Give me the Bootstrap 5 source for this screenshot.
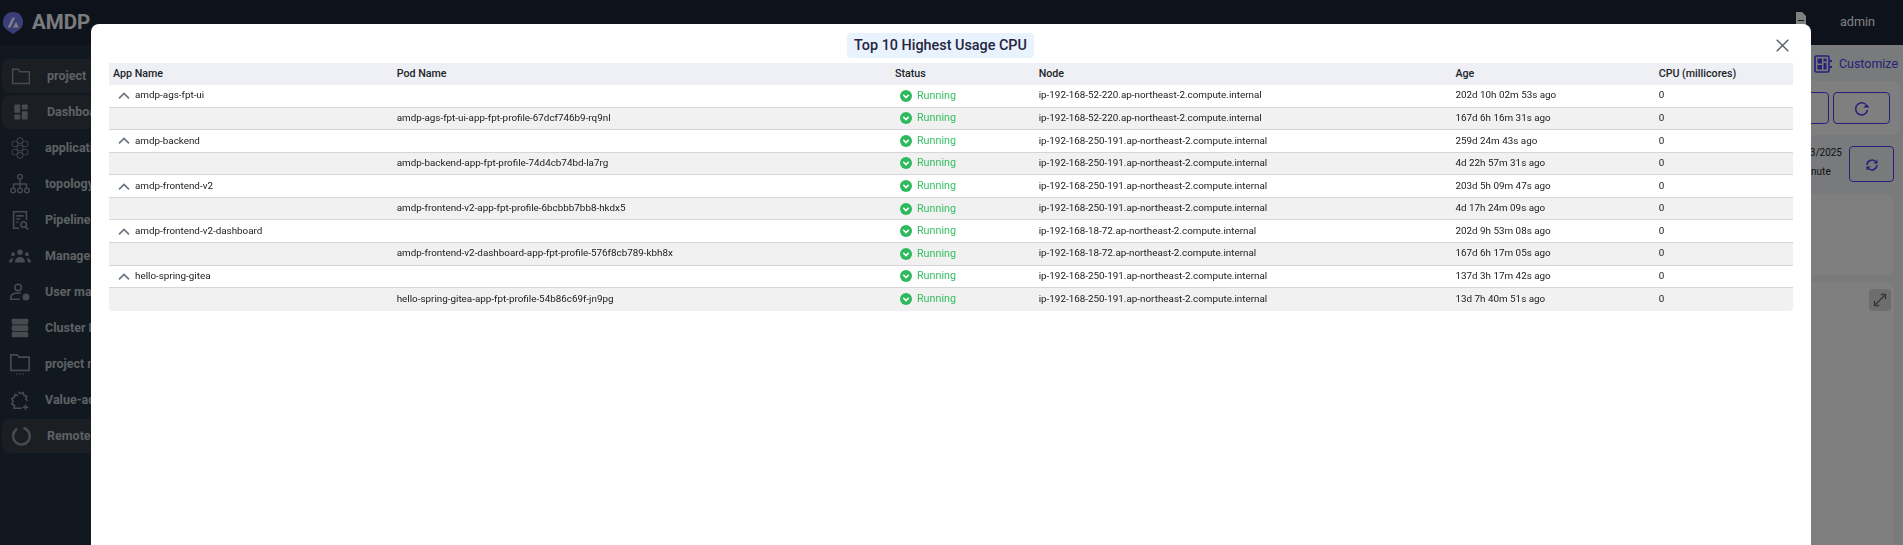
<!DOCTYPE html>
<html lang="en">
<head>
<meta charset="utf-8">
<title>AMDP</title>
<link href="https://cdn.jsdelivr.net/npm/bootstrap@5.3.0/dist/css/bootstrap.min.css" rel="stylesheet">
<style>
html,body{height:545px;overflow:hidden}
body{font-family:Roboto,"Liberation Sans",sans-serif;background:#f1f5f9;color:#212529}
.app-top{height:45px;background:#1c2434}
.app-brand{width:290px;padding-left:3px;gap:9px}
.brand-name{font-size:20.5px;font-weight:700;color:#f4f6fa;line-height:1}
.top-doc{margin-right:34px;margin-top:-8px}
.top-user{font-size:12.6px;color:#fff;margin-right:28px}
.app-body{height:500px}
.app-side{width:290px;background:#24303f;padding-top:13px;flex:none}
.side-item{height:36px;color:#bcc2c9;font-size:12.5px;font-weight:700;padding-left:9px;gap:14px;white-space:nowrap;position:relative;z-index:0}
.side-ico{width:22px;height:22px;flex:none;color:#8f959d}
.side-item.is-on{padding-left:11px;gap:16px}
.side-item.is-on .side-ico{width:20px;height:20px}
.side-item.is-on::before{content:"";position:absolute;left:2px;right:2px;top:1px;bottom:1px;background:#363c46;border-radius:8px;z-index:-1}
.app-main{min-width:0;padding-right:3px}
.app-main>*{flex:none}
.cust-row{height:36px;padding:2px 2px 0 0;gap:7px;font-size:12.44px;color:#5040f0}
.panel-a{height:54px;background:#fff;border-radius:8px;padding:11px 10px 0 0;gap:4px}
.out-btn{height:32px;width:57px;border:1px solid #5040f0;border-radius:4px;color:#5040f0;background:transparent;padding:0}
.out-btn svg{width:16px;height:16px}
.time-row{height:59px;padding:8px 6px 0 0;gap:7px;font-size:10px;color:#212529;line-height:19px}
.time-two{padding-left:3px}
.time-btn{width:45px;height:36px;margin-top:3px}
.panel-b{background:#fff;border-radius:8px;margin-right:6px}
.panel-one{height:81px}
.panel-two{height:263px;margin-top:7px;padding:7px 3px 0 0;border-radius:8px 8px 0 0}
.exp-btn{width:22px;height:22px;background:#dcdcdc;border-radius:4px;color:#666}
.cpu-dialog{max-width:1720px;width:1720px;margin:24px 0 0 91px}
.cpu-content{height:521px;border:0;border-radius:8px 8px 0 0;padding:9px 18px 0}
.cpu-head{height:30px}
.cpu-title{background:#e9f3fd;color:#26263f;font-size:14.38px;font-weight:500;border-radius:4px;padding:0 7px;height:25px;line-height:25px;margin-right:21px!important}
.cpu-x{right:4px;top:6px;width:13px;height:13px;padding:0;border:0;background:transparent;color:#5a6268}
.cpu-table{font-size:9.85px;table-layout:fixed;width:1684px;margin:0;border-collapse:separate;border-spacing:0;color:#1a1a1a}
.cpu-table th{background:#eff0f5;font-size:10.7px;font-weight:500;height:22px;padding:0 4px;border:0;vertical-align:middle;white-space:nowrap;color:#212529;box-shadow:none}
.cpu-table td{height:22.57px;padding:0 4px;border:0;border-bottom:1px solid #d6d6d6;vertical-align:middle;white-space:nowrap;box-shadow:none;background:#fff}
.cpu-table tr.pod-row td{background:#f1f1f1}
.cpu-table tr:last-child td{border-bottom:0}
.cpu-table tr:last-child td:first-child{border-bottom-left-radius:4px}
.cpu-table tr:last-child td:last-child{border-bottom-right-radius:4px}
.app-cell{padding-left:5px;gap:5px}
.chev{width:12px;height:7px;color:#6b7480;flex:none}
.run-cell{color:#35bf63;font-size:10.75px;padding-left:5px;gap:5px}
.run-ico{width:12px;height:12px;flex:none}
</style>
</head>
<body>
<svg width="0" height="0" class="d-none">
  <symbol id="chev" viewBox="0 0 12 7"><path d="M1 6.300 6 1.400 11 6.300" fill="none" stroke="currentColor" stroke-width="1.700"/></symbol>
  <symbol id="run" viewBox="0 0 12 12"><circle cx="6" cy="6" r="6" fill="#2fb95d"/><path d="M3.300 4.900 6 7.600 8.700 4.900" fill="none" stroke="#fff" stroke-width="1.500"/></symbol>
  <symbol id="hex" viewBox="0 0 8 8"><path d="M4 .5 7.200 2.250v3.500L4 7.500.8 5.750v-3.500z" fill="none" stroke="currentColor"/></symbol>
</svg>

<div class="app-top d-flex align-items-center">
  <div class="app-brand d-flex align-items-center">
    <svg width="20" height="22" viewBox="0 0 20 22"><path d="M10 0a10 10 0 0 1 7 17.200L10 22l-7-4.800A10 10 0 0 1 10 0z" fill="#757cf0"/><path d="M4.500 15.500 9.500 5.500H12L7.500 15.500zM10 15.500l3-5.500 3 5.500z" fill="#fff"/></svg>
    <span class="brand-name">AMDP</span>
  </div>
  <div class="ms-auto d-flex align-items-center">
    <svg class="top-doc" width="10" height="13" viewBox="0 0 10 13"><path d="M0 0h6l4 4v9H0z" fill="#fff"/><path d="M2 8h6v1H2z" fill="#1c2434"/></svg>
    <span class="top-user">admin</span>
  </div>
</div>

<div class="app-body d-flex">
  <nav class="app-side d-flex flex-column">
    <div class="side-item is-on d-flex align-items-center"><svg class="side-ico" viewBox="0 0 24 24" fill="none" stroke="currentColor" stroke-width="1.800"><path d="M2 4h7l2 3h11v14H2z"/></svg>project</div>
    <div class="side-item is-on d-flex align-items-center"><svg class="side-ico" viewBox="0 0 24 24" fill="currentColor"><rect x="4" y="3" width="7" height="10" rx="1"/><rect x="13" y="3" width="7" height="6" rx="1"/><rect x="4" y="15" width="7" height="6" rx="1"/><rect x="13" y="11" width="7" height="10" rx="1"/></svg>Dashboard</div>
    <div class="side-item d-flex align-items-center"><svg class="side-ico" viewBox="0 0 24 24"><use href="#hex" x="8" y="0" width="8" height="8"/><use href="#hex" x="2.500" y="3.500" width="8" height="8"/><use href="#hex" x="13.500" y="3.500" width="8" height="8"/><use href="#hex" x="8" y="8" width="8" height="8"/><use href="#hex" x="2.500" y="12.500" width="8" height="8"/><use href="#hex" x="13.500" y="12.500" width="8" height="8"/><use href="#hex" x="8" y="16" width="8" height="8"/></svg>application</div>
    <div class="side-item d-flex align-items-center"><svg class="side-ico" viewBox="0 0 24 24" fill="none" stroke="currentColor" stroke-width="1.500"><circle cx="12" cy="4" r="2.500"/><path d="M12 7v9M5 16v-4h14v4"/><circle cx="4.500" cy="19" r="2.500"/><circle cx="12" cy="19" r="2.500"/><circle cx="19.500" cy="19" r="2.500"/></svg>topology</div>
    <div class="side-item d-flex align-items-center"><svg class="side-ico" viewBox="0 0 24 24" fill="none" stroke="currentColor" stroke-width="1.700"><path d="M11 21H5V3h14v9M8 7.500h8M8 11h4M8 14.500h2"/><circle cx="16" cy="17" r="3"/><path d="M18 19.500l3 3"/></svg>Pipeline</div>
    <div class="side-item d-flex align-items-center"><svg class="side-ico" viewBox="0 0 24 24" fill="currentColor"><circle cx="12" cy="8" r="3"/><circle cx="4.500" cy="10" r="2"/><circle cx="19.500" cy="10" r="2"/><path d="M6.500 19c0-4 2.500-6 5.500-6s5.500 2 5.500 6zM0 19c0-3 2-5 5-4.500-1 1-1.500 2.500-1.500 4.500zM24 19c0-3-2-5-5-4.500 1 1 1.500 2.500 1.500 4.500z"/></svg>Manage</div>
    <div class="side-item d-flex align-items-center"><svg class="side-ico" viewBox="0 0 24 24" fill="none" stroke="currentColor" stroke-width="1.700"><circle cx="10" cy="7" r="3.500"/><path d="M12 20H2v-2c0-3 3-5 8-5 1 0 2 .1 3 .4"/><circle cx="18.500" cy="17.500" r="3" fill="currentColor"/></svg>User management</div>
    <div class="side-item d-flex align-items-center"><svg class="side-ico" viewBox="0 0 24 24" fill="currentColor"><rect x="3" y="2" width="18" height="6.200" rx="1.500"/><rect x="3" y="9" width="18" height="6.200" rx="1.500"/><rect x="3" y="16" width="18" height="6.200" rx="1.500"/></svg>Cluster Management</div>
    <div class="side-item d-flex align-items-center"><svg class="side-ico" viewBox="0 0 24 24" fill="none" stroke="currentColor" stroke-width="1.800"><path d="M2 2h7l2 2.500h11V19H2z"/><path d="M8 23h1.500M11.250 23h1.500M14.500 23H16" stroke-width="1.200"/></svg>project management</div>
    <div class="side-item d-flex align-items-center"><svg class="side-ico" viewBox="0 0 24 24" fill="none" stroke="currentColor" stroke-width="1.700"><path d="M10 3l2.500 2 3-1 .8 3 3 .8-1 3 2 2.200M14 21H5.500l.5-3-3-1.500 1.500-3-1.500-3 3-1.500.5-3 3.500 1"/><path d="M18 17v6M15 20h6"/></svg>Value-added</div>
    <div class="side-item is-on d-flex align-items-center"><svg class="side-ico" viewBox="0 0 24 24" fill="none" stroke="currentColor" stroke-width="3"><path d="M7.500 3.500A10 10 0 1 0 15 2.500"/></svg>Remote</div>
  </nav>
  <main class="app-main flex-grow-1 d-flex flex-column">
    <div class="cust-row d-flex justify-content-end align-items-center">
      <svg width="18" height="18" viewBox="0 0 18 18" fill="none" stroke="currentColor" stroke-width="1.600"><rect x="1" y="1" width="14" height="16" rx="1.500"/><path d="M3.500 3.500h4.500v5H3.500zM9.500 3.500H12.500v3H9.500zM3.500 10h4.500v4.500H3.500zM9.500 8H12.500v6.500H9.500zM16 5h2v2h-2zM16 11h2v2h-2z" fill="currentColor" stroke="none"/></svg>
      <span>Customize</span>
    </div>
    <div class="panel-a d-flex justify-content-end">
      <button class="out-btn" aria-label="filter"></button>
      <button class="out-btn" aria-label="reload"><svg viewBox="0 0 16 16" fill="none" stroke="currentColor" stroke-width="1.500"><path d="M13.500 9A6 6 0 1 1 11.500 3.300"/><path d="M15.500 6.500H9.500l3-3.500z" fill="currentColor" stroke="none"/></svg></button>
    </div>
    <div class="time-row d-flex justify-content-end">
      <div>03/03/2025<div class="time-two">1 minute</div></div>
      <button class="out-btn time-btn" aria-label="refresh"><svg viewBox="0 0 16 16" fill="none" stroke="currentColor" stroke-width="1.500"><path d="M3 8a5 5 0 0 1 8.500-3.500L13 6M13 8a5 5 0 0 1-8.500 3.500L3 10"/><path d="M13.500 2.500V6.500h-4zM2.500 13.500V9.500h4z" fill="currentColor" stroke="none"/></svg></button>
    </div>
    <div class="panel-b panel-one"></div>
    <div class="panel-b panel-two d-flex justify-content-end align-items-start">
      <div class="exp-btn d-flex align-items-center justify-content-center"><svg width="14" height="14" viewBox="0 0 14 14" fill="none" stroke="currentColor" stroke-width="1.300"><path d="M2.500 11.500l9-9"/><path d="M8 1.500h4.500V6M1.500 8v4.500H6"/></svg></div>
    </div>
  </main>
</div>

<div class="modal-backdrop fade show"></div>
<div class="modal fade show d-block" tabindex="-1" role="dialog">
  <div class="modal-dialog cpu-dialog">
    <div class="modal-content cpu-content">
      <div class="cpu-head position-relative d-flex justify-content-center align-items-start">
        <h5 class="cpu-title m-0">Top 10 Highest Usage CPU</h5>
        <button class="cpu-x position-absolute" aria-label="Close"><svg width="13" height="13" viewBox="0 0 13 13" class="d-block"><path d="M.7.700l11.600 11.600M12.300.700.700 12.300" stroke="currentColor" stroke-width="1.500" fill="none"/></svg></button>
      </div>
      <table class="table cpu-table">
        <colgroup><col style="width:283.7px"><col style="width:498.3px"><col style="width:143.7px"><col style="width:416.8px"><col style="width:203.2px"><col style="width:138.3px"></colgroup>
        <thead><tr><th>App Name</th><th>Pod Name</th><th>Status</th><th>Node</th><th>Age</th><th>CPU (millicores)</th></tr></thead>
        <tbody>
          <tr><td><div class="app-cell d-flex align-items-center"><svg class="chev"><use href="#chev"/></svg>amdp-ags-fpt-ui</div></td><td></td><td><div class="run-cell d-flex align-items-center"><svg class="run-ico"><use href="#run"/></svg>Running</div></td><td>ip-192-168-52-220.ap-northeast-2.compute.internal</td><td>202d 10h 02m 53s ago</td><td>0</td></tr>
          <tr class="pod-row"><td></td><td>amdp-ags-fpt-ui-app-fpt-profile-67dcf746b9-rq9nl</td><td><div class="run-cell d-flex align-items-center"><svg class="run-ico"><use href="#run"/></svg>Running</div></td><td>ip-192-168-52-220.ap-northeast-2.compute.internal</td><td>167d 6h 16m 31s ago</td><td>0</td></tr>
          <tr><td><div class="app-cell d-flex align-items-center"><svg class="chev"><use href="#chev"/></svg>amdp-backend</div></td><td></td><td><div class="run-cell d-flex align-items-center"><svg class="run-ico"><use href="#run"/></svg>Running</div></td><td>ip-192-168-250-191.ap-northeast-2.compute.internal</td><td>259d 24m 43s ago</td><td>0</td></tr>
          <tr class="pod-row"><td></td><td>amdp-backend-app-fpt-profile-74d4cb74bd-la7rg</td><td><div class="run-cell d-flex align-items-center"><svg class="run-ico"><use href="#run"/></svg>Running</div></td><td>ip-192-168-250-191.ap-northeast-2.compute.internal</td><td>4d 22h 57m 31s ago</td><td>0</td></tr>
          <tr><td><div class="app-cell d-flex align-items-center"><svg class="chev"><use href="#chev"/></svg>amdp-frontend-v2</div></td><td></td><td><div class="run-cell d-flex align-items-center"><svg class="run-ico"><use href="#run"/></svg>Running</div></td><td>ip-192-168-250-191.ap-northeast-2.compute.internal</td><td>203d 5h 09m 47s ago</td><td>0</td></tr>
          <tr class="pod-row"><td></td><td>amdp-frontend-v2-app-fpt-profile-6bcbbb7bb8-hkdx5</td><td><div class="run-cell d-flex align-items-center"><svg class="run-ico"><use href="#run"/></svg>Running</div></td><td>ip-192-168-250-191.ap-northeast-2.compute.internal</td><td>4d 17h 24m 09s ago</td><td>0</td></tr>
          <tr><td><div class="app-cell d-flex align-items-center"><svg class="chev"><use href="#chev"/></svg>amdp-frontend-v2-dashboard</div></td><td></td><td><div class="run-cell d-flex align-items-center"><svg class="run-ico"><use href="#run"/></svg>Running</div></td><td>ip-192-168-18-72.ap-northeast-2.compute.internal</td><td>202d 9h 53m 08s ago</td><td>0</td></tr>
          <tr class="pod-row"><td></td><td>amdp-frontend-v2-dashboard-app-fpt-profile-576f8cb789-kbh8x</td><td><div class="run-cell d-flex align-items-center"><svg class="run-ico"><use href="#run"/></svg>Running</div></td><td>ip-192-168-18-72.ap-northeast-2.compute.internal</td><td>167d 6h 17m 05s ago</td><td>0</td></tr>
          <tr><td><div class="app-cell d-flex align-items-center"><svg class="chev"><use href="#chev"/></svg>hello-spring-gitea</div></td><td></td><td><div class="run-cell d-flex align-items-center"><svg class="run-ico"><use href="#run"/></svg>Running</div></td><td>ip-192-168-250-191.ap-northeast-2.compute.internal</td><td>137d 3h 17m 42s ago</td><td>0</td></tr>
          <tr class="pod-row"><td></td><td>hello-spring-gitea-app-fpt-profile-54b86c69f-jn9pg</td><td><div class="run-cell d-flex align-items-center"><svg class="run-ico"><use href="#run"/></svg>Running</div></td><td>ip-192-168-250-191.ap-northeast-2.compute.internal</td><td>13d 7h 40m 51s ago</td><td>0</td></tr>
        </tbody>
      </table>
    </div>
  </div>
</div>
<script src="https://cdn.jsdelivr.net/npm/bootstrap@5.3.0/dist/js/bootstrap.bundle.min.js"></script>
</body>
</html>
